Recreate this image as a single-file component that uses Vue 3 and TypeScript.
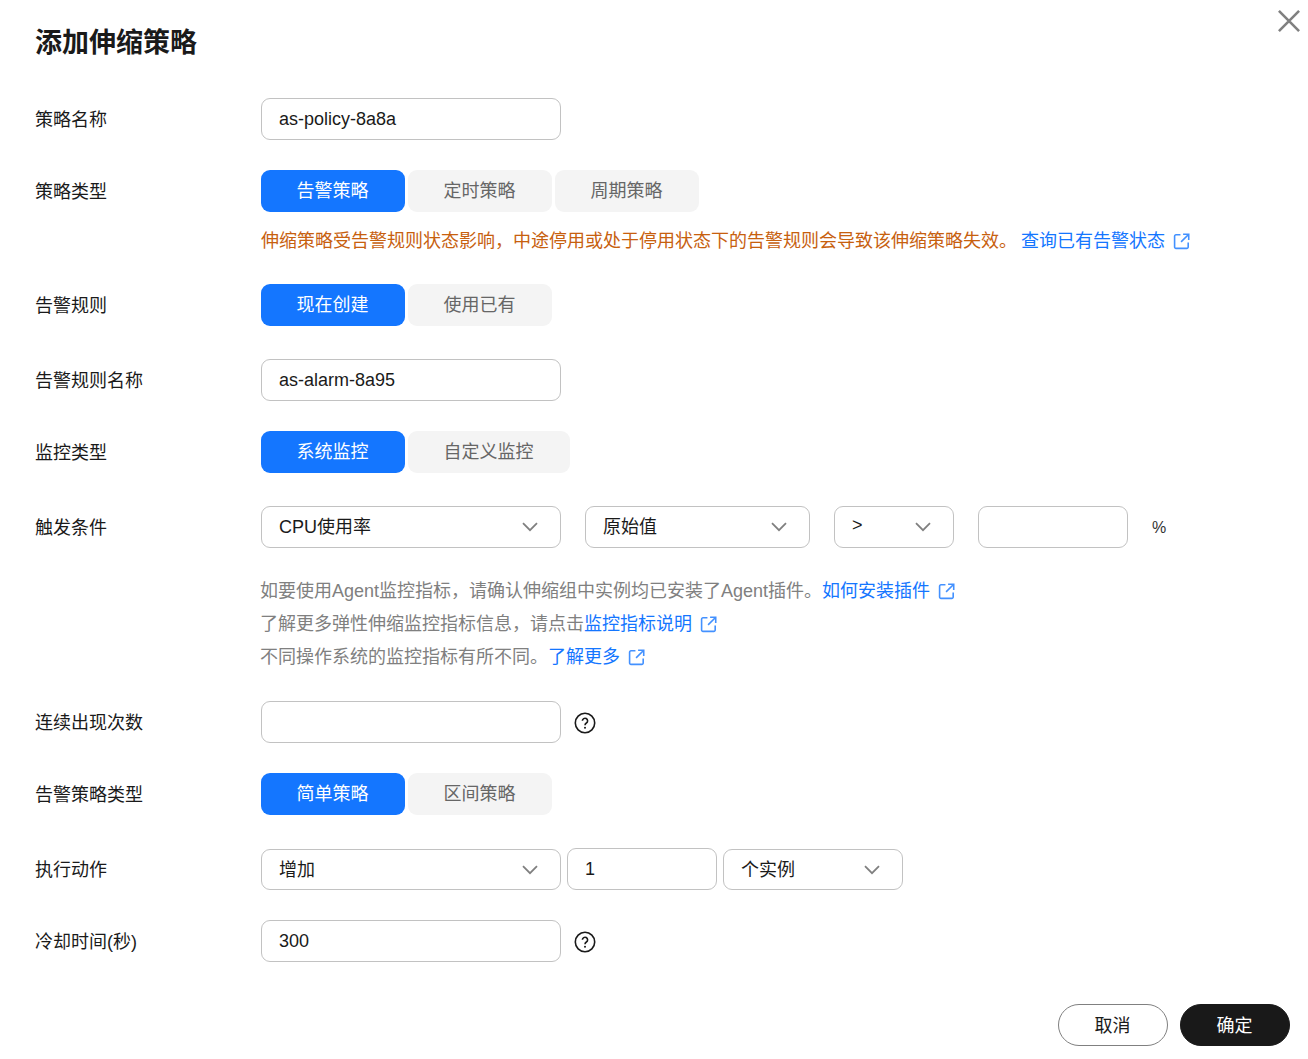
<template>
  <div class="dialog">
    <button type="button" class="dialog__close" aria-label="关闭">
      <svg viewBox="0 0 24 24" width="22" height="22"><path d="M1 1 23 23M23 1 1 23" /></svg>
    </button>
    <h1 class="dialog__title">添加伸缩策略</h1>

    <div class="row row--name">
      <label>策略名称</label>
      <input class="field w-300" value="as-policy-8a8a" />
    </div>

    <div class="row row--gap30">
      <label>策略类型</label>
      <div class="tabs">
        <span v-for="(t, i) in policyTypes" :key="t" class="tab" :class="{ 'tab--on': i === 0 }">{{ t }}</span>
      </div>
    </div>
    <p class="warn">
      伸缩策略受告警规则状态影响，中途停用或处于停用状态下的告警规则会导致该伸缩策略失效。
      <a class="link link--warn">查询已有告警状态<svg class="ext" viewBox="0 0 16 16"><path d="M7 1.7H2.8A1.3 1.3 0 0 0 1.5 3v10.2a1.3 1.3 0 0 0 1.3 1.3H13a1.3 1.3 0 0 0 1.3-1.3V9M9.5 1.2h5.3v5.3M14.6 1.4 7.6 8.4" /></svg></a>
    </p>

    <div class="row row--rule">
      <label>告警规则</label>
      <div class="tabs">
        <span class="tab tab--on">现在创建</span>
        <span class="tab">使用已有</span>
      </div>
    </div>

    <div class="row row--gap33">
      <label>告警规则名称</label>
      <input class="field w-300" value="as-alarm-8a95" />
    </div>

    <div class="row row--gap30">
      <label>监控类型</label>
      <div class="tabs">
        <span class="tab tab--on">系统监控</span>
        <span class="tab tab--wide">自定义监控</span>
      </div>
    </div>

    <div class="row row--gap33">
      <label>触发条件</label>
      <div class="controls controls--24">
        <div class="select w-300">CPU使用率<svg class="chev" viewBox="0 0 16 10"><path d="M1 1.2 8 8.2 15 1.2" /></svg></div>
        <div class="select w-225">原始值<svg class="chev" viewBox="0 0 16 10"><path d="M1 1.2 8 8.2 15 1.2" /></svg></div>
        <div class="select w-120">&gt;<svg class="chev" viewBox="0 0 16 10"><path d="M1 1.2 8 8.2 15 1.2" /></svg></div>
        <input class="field w-150" />
        <span class="unit">%</span>
      </div>
    </div>

    <div class="hints">
      <p>如要使用Agent监控指标，请确认伸缩组中实例均已安装了Agent插件。<a class="link">如何安装插件<svg class="ext" viewBox="0 0 16 16"><path d="M7 1.7H2.8A1.3 1.3 0 0 0 1.5 3v10.2a1.3 1.3 0 0 0 1.3 1.3H13a1.3 1.3 0 0 0 1.3-1.3V9M9.5 1.2h5.3v5.3M14.6 1.4 7.6 8.4" /></svg></a></p>
      <p>了解更多弹性伸缩监控指标信息，请点击<a class="link">监控指标说明<svg class="ext" viewBox="0 0 16 16"><path d="M7 1.7H2.8A1.3 1.3 0 0 0 1.5 3v10.2a1.3 1.3 0 0 0 1.3 1.3H13a1.3 1.3 0 0 0 1.3-1.3V9M9.5 1.2h5.3v5.3M14.6 1.4 7.6 8.4" /></svg></a></p>
      <p>不同操作系统的监控指标有所不同。<a class="link">了解更多<svg class="ext" viewBox="0 0 16 16"><path d="M7 1.7H2.8A1.3 1.3 0 0 0 1.5 3v10.2a1.3 1.3 0 0 0 1.3 1.3H13a1.3 1.3 0 0 0 1.3-1.3V9M9.5 1.2h5.3v5.3M14.6 1.4 7.6 8.4" /></svg></a></p>
    </div>

    <div class="row row--count">
      <label>连续出现次数</label>
      <div class="controls controls--13">
        <input class="field w-300" />
        <svg class="help" viewBox="0 0 22 22"><circle cx="11" cy="11" r="9.7" /><path d="M8.4 8.8a2.6 2.6 0 1 1 4 2.2c-.9.6-1.4 1.1-1.4 2.2" /><circle class="help__dot" cx="11" cy="15.8" r="1" /></svg>
      </div>
    </div>

    <div class="row row--gap30">
      <label>告警策略类型</label>
      <div class="tabs">
        <span class="tab tab--on">简单策略</span>
        <span class="tab">区间策略</span>
      </div>
    </div>

    <div class="row row--action">
      <label>执行动作</label>
      <div class="controls controls--6">
        <div class="select w-300 select--low">增加<svg class="chev" viewBox="0 0 16 10"><path d="M1 1.2 8 8.2 15 1.2" /></svg></div>
        <input class="field w-150" value="1" />
        <div class="select w-180 select--low">个实例<svg class="chev" viewBox="0 0 16 10"><path d="M1 1.2 8 8.2 15 1.2" /></svg></div>
      </div>
    </div>

    <div class="row row--gap30">
      <label>冷却时间(秒)</label>
      <div class="controls controls--13">
        <input class="field w-300" value="300" />
        <svg class="help" viewBox="0 0 22 22"><circle cx="11" cy="11" r="9.7" /><path d="M8.4 8.8a2.6 2.6 0 1 1 4 2.2c-.9.6-1.4 1.1-1.4 2.2" /><circle class="help__dot" cx="11" cy="15.8" r="1" /></svg>
      </div>
    </div>

    <footer class="dialog__footer">
      <button type="button" class="btn">取消</button>
      <button type="button" class="btn btn--primary">确定</button>
    </footer>
  </div>
</template>

<script setup lang="ts">
const policyTypes: string[] = ['告警策略', '定时策略', '周期策略']
</script>

<style>
html,
body {
  margin: 0;
  background: #fff;
}
</style>

<style scoped>
.dialog {
  position: relative;
  box-sizing: border-box;
  width: 1308px;
  height: 1059px;
  padding: 0 18px 0 36px;
  background: #fff;
  color: #1a1a1a;
  font-family: "Liberation Sans", "Noto Sans CJK SC", sans-serif;
  font-size: 18px;
  overflow: hidden;
}

.dialog__close {
  position: absolute;
  top: 10px;
  right: 8px;
  padding: 0;
  border: none;
  background: none;
  line-height: 0;
}

.dialog__close path {
  fill: none;
  stroke: #808080;
  stroke-width: 2.8;
}

.dialog__title {
  margin: 0 0 0 -1px;
  padding-top: 23px;
  height: 76px;
  box-sizing: border-box;
  font-size: 27px;
  line-height: 40px;
  font-weight: 700;
}

.row {
  display: flex;
  align-items: center;
  min-height: 42px;
}

.row > label {
  flex: 0 0 226px;
  margin-left: -1px;
  padding-bottom: 3px;
}

.row--name { margin-top: 22px; }
.row--gap30 { margin-top: 30px; }
.row--gap33 { margin-top: 33px; }
.row--rule { margin-top: 26px; }
.row--count { margin-top: 27px; }
.row--action { margin-top: 33px; }

.tabs {
  display: flex;
  gap: 3px;
}

.tab {
  box-sizing: border-box;
  width: 144px;
  height: 42px;
  padding: 0 1px 4px 0;
  border-radius: 9px;
  background: #f4f4f4;
  color: #666;
  display: flex;
  align-items: center;
  justify-content: center;
}

.tab--wide { width: 162px; }

.tab--on {
  background: #1476ff;
  color: #fff;
}

.field,
.select {
  box-sizing: border-box;
  height: 42px;
  padding: 0 17px;
  border: 1px solid #c2c2c2;
  border-radius: 9px;
  background: #fff;
  color: #1a1a1a;
  font: inherit;
  outline: none;
}

.select {
  display: flex;
  align-items: center;
  justify-content: space-between;
  padding-right: 22px;
  padding-bottom: 4px;
}

.select--low {
  height: 41px;
  margin-top: 1px;
}

.chev {
  width: 16px;
  height: 10px;
  flex: none;
  margin-top: 4px;
}

.chev path {
  fill: none;
  stroke: #808080;
  stroke-width: 1.8;
}

.w-120 { width: 120px; }
.w-150 { width: 150px; }
.w-180 { width: 180px; }
.w-225 { width: 225px; }
.w-300 { width: 300px; }

.controls {
  display: flex;
  align-items: center;
}

.controls--24 { gap: 24px; }
.controls--13 { gap: 13px; }
.controls--6 { gap: 6px; }

.unit {
  color: #333;
  font-size: 16px;
  padding-top: 2px;
}

.warn {
  margin: 13px 0 0 225px;
  color: #c7600e;
  line-height: 33px;
  white-space: nowrap;
}

.hints {
  margin: 27px 0 0 224px;
  color: #808080;
}

.hints p {
  margin: 0;
  line-height: 33px;
  white-space: nowrap;
}

.link {
  color: #1476ff;
}

.link--warn {
  margin-left: -1px;
}

.ext {
  width: 17px;
  height: 17px;
  margin-left: 8px;
  vertical-align: -3px;
}

.ext path {
  fill: none;
  stroke: #1476ff;
  stroke-width: 1.5;
  opacity: 0.8;
}

.help {
  width: 22px;
  height: 22px;
  margin-top: 1px;
}

.help circle,
.help path {
  fill: none;
  stroke: #1a1a1a;
  stroke-width: 1.6;
}

.help .help__dot {
  fill: #1a1a1a;
  stroke: none;
}

.dialog__footer {
  display: flex;
  justify-content: flex-end;
  gap: 12px;
  margin-top: 42px;
}

.btn {
  width: 110px;
  height: 42px;
  padding: 0 1px 3px 0;
  border: 1px solid #808080;
  border-radius: 21px;
  background: #fff;
  color: #1a1a1a;
  font: inherit;
}

.btn--primary {
  border-color: #191919;
  background: #191919;
  color: #fff;
}
</style>
